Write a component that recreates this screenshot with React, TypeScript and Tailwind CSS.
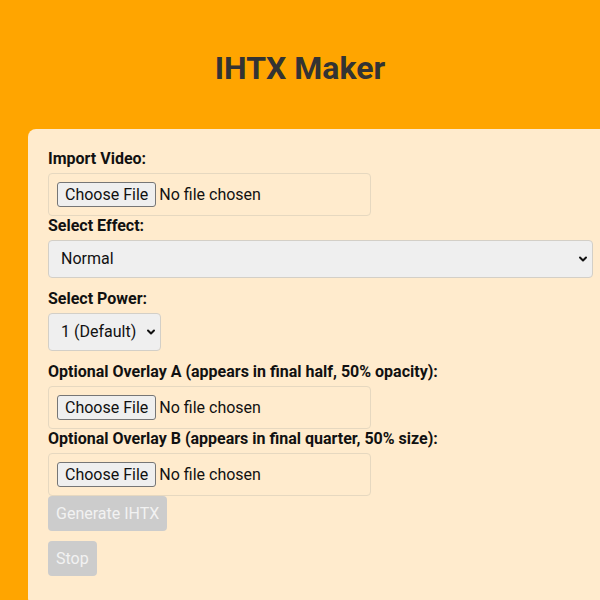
import { ChevronDown } from 'lucide-react';

const font = { fontFamily: 'Roboto, "Liberation Sans", sans-serif' };

function FileField({ label }: { label: string }) {
    return (
        <>
            <label className="block text-base font-bold leading-[19px] mb-[5px] text-[#111]">{label}</label>
            <input
                type="file"
                className="block w-[323px] p-2 border border-[#e6d8c0] rounded-[4px] text-base leading-[19px] text-[#111] file:mr-[3px] file:px-[7px] file:py-[2px] file:border file:border-[#767676] file:rounded-[3px] file:bg-[#efefef] file:text-[#111]"
            />
        </>
    );
}

function SelectField({ label, options, wide }: { label: string; options: string[]; wide?: boolean }) {
    return (
        <>
            <label className="block text-base font-bold leading-[19px] mb-[5px] text-[#111]">{label}</label>
            <div className={`relative mb-[11px] ${wide ? 'w-full' : 'w-[113px]'}`}>
                <select className="block w-full h-[38px] appearance-none pl-3 pr-6 bg-[#efefef] border border-[#d3cfc7] rounded-[4px] text-base text-[#111]">
                    {options.map((o) => (
                        <option key={o}>{o}</option>
                    ))}
                </select>
                <ChevronDown className="absolute right-[4px] top-[13px] w-3 h-3 text-[#111] pointer-events-none" strokeWidth={4} />
            </div>
        </>
    );
}

export default function App() {
    return (
        <div className="w-[600px] h-[600px] overflow-hidden bg-[#FFA500]" style={font}>
            <h1 className="pt-[49px] mb-[42px] text-center text-[32px] leading-[38px] font-bold text-[#333]">IHTX Maker</h1>
            <div className="ml-[28px] w-[585px] bg-[#FFEBCD] rounded-lg p-5">
                <FileField label="Import Video:" />
                <SelectField label="Select Effect:" options={['Normal', 'Inverted', 'Grayscale']} wide />
                <SelectField label="Select Power:" options={['1 (Default)', '2', '3']} />
                <FileField label="Optional Overlay A (appears in final half, 50% opacity):" />
                <FileField label="Optional Overlay B (appears in final quarter, 50% size):" />
                <button disabled className="block mb-[10px] px-2 py-2 bg-[#cccccc] text-[#f2f2f2] text-base leading-[19px] rounded-[4px]">
                    Generate IHTX
                </button>
                <button disabled className="block mb-[10px] px-2 py-2 bg-[#cccccc] text-[#f2f2f2] text-base leading-[19px] rounded-[4px]">
                    Stop
                </button>
            </div>
        </div>
    );
}
